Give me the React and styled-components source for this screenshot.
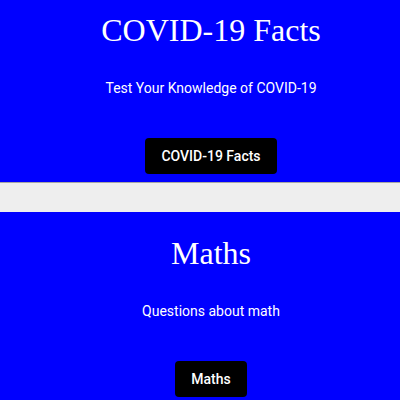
import React from "react";
import styled, { createGlobalStyle } from "styled-components";

const GlobalStyle = createGlobalStyle`
  body {
    margin: 0;
    background: #eeeeee;
    font-family: Roboto, "Liberation Sans", sans-serif;
  }
`;

const Page = styled.div`
  display: flex;
  flex-direction: column;
  gap: 30px;
`;

const Card = styled.section`
  background: #0000ff;
  color: #ffffff;
  display: flex;
  flex-direction: column;
  align-items: center;
  padding: ${(p) => (p.$first ? "12px" : "23px")} 0 8px 22px;
  box-shadow: 0 1px 0 rgba(0, 0, 0, 0.3);
`;

const Title = styled.h1`
  font-family: "Liberation Serif", "Times New Roman", serif;
  font-size: 32px;
  font-weight: 400;
  line-height: 37px;
  margin: 0;
`;

const Subtitle = styled.p`
  font-family: Roboto, sans-serif;
  font-size: 14px;
  line-height: 16px;
  margin: 31px 0 0;
`;

const Button = styled.button`
  margin-top: 42px;
  height: 36px;
  padding: 0 16px;
  border: none;
  border-radius: 4px;
  background: #000000;
  color: #ffffff;
  font-family: Roboto, sans-serif;
  font-size: 14px;
  font-weight: 500;
  cursor: pointer;
`;

const quizzes = [
  {
    title: "COVID-19 Facts",
    text: "Test Your Knowledge of COVID-19",
    btn: "COVID-19 Facts",
  },
  { title: "Maths", text: "Questions about math", btn: "Maths" },
];

const App = () => {
  return (
    <>
      <GlobalStyle />
      <Page>
        {quizzes.map((q, i) => (
          <Card key={q.title} $first={i === 0}>
            <Title>{q.title}</Title>
            <Subtitle>{q.text}</Subtitle>
            <Button>{q.btn}</Button>
          </Card>
        ))}
      </Page>
    </>
  );
};

export default App;
